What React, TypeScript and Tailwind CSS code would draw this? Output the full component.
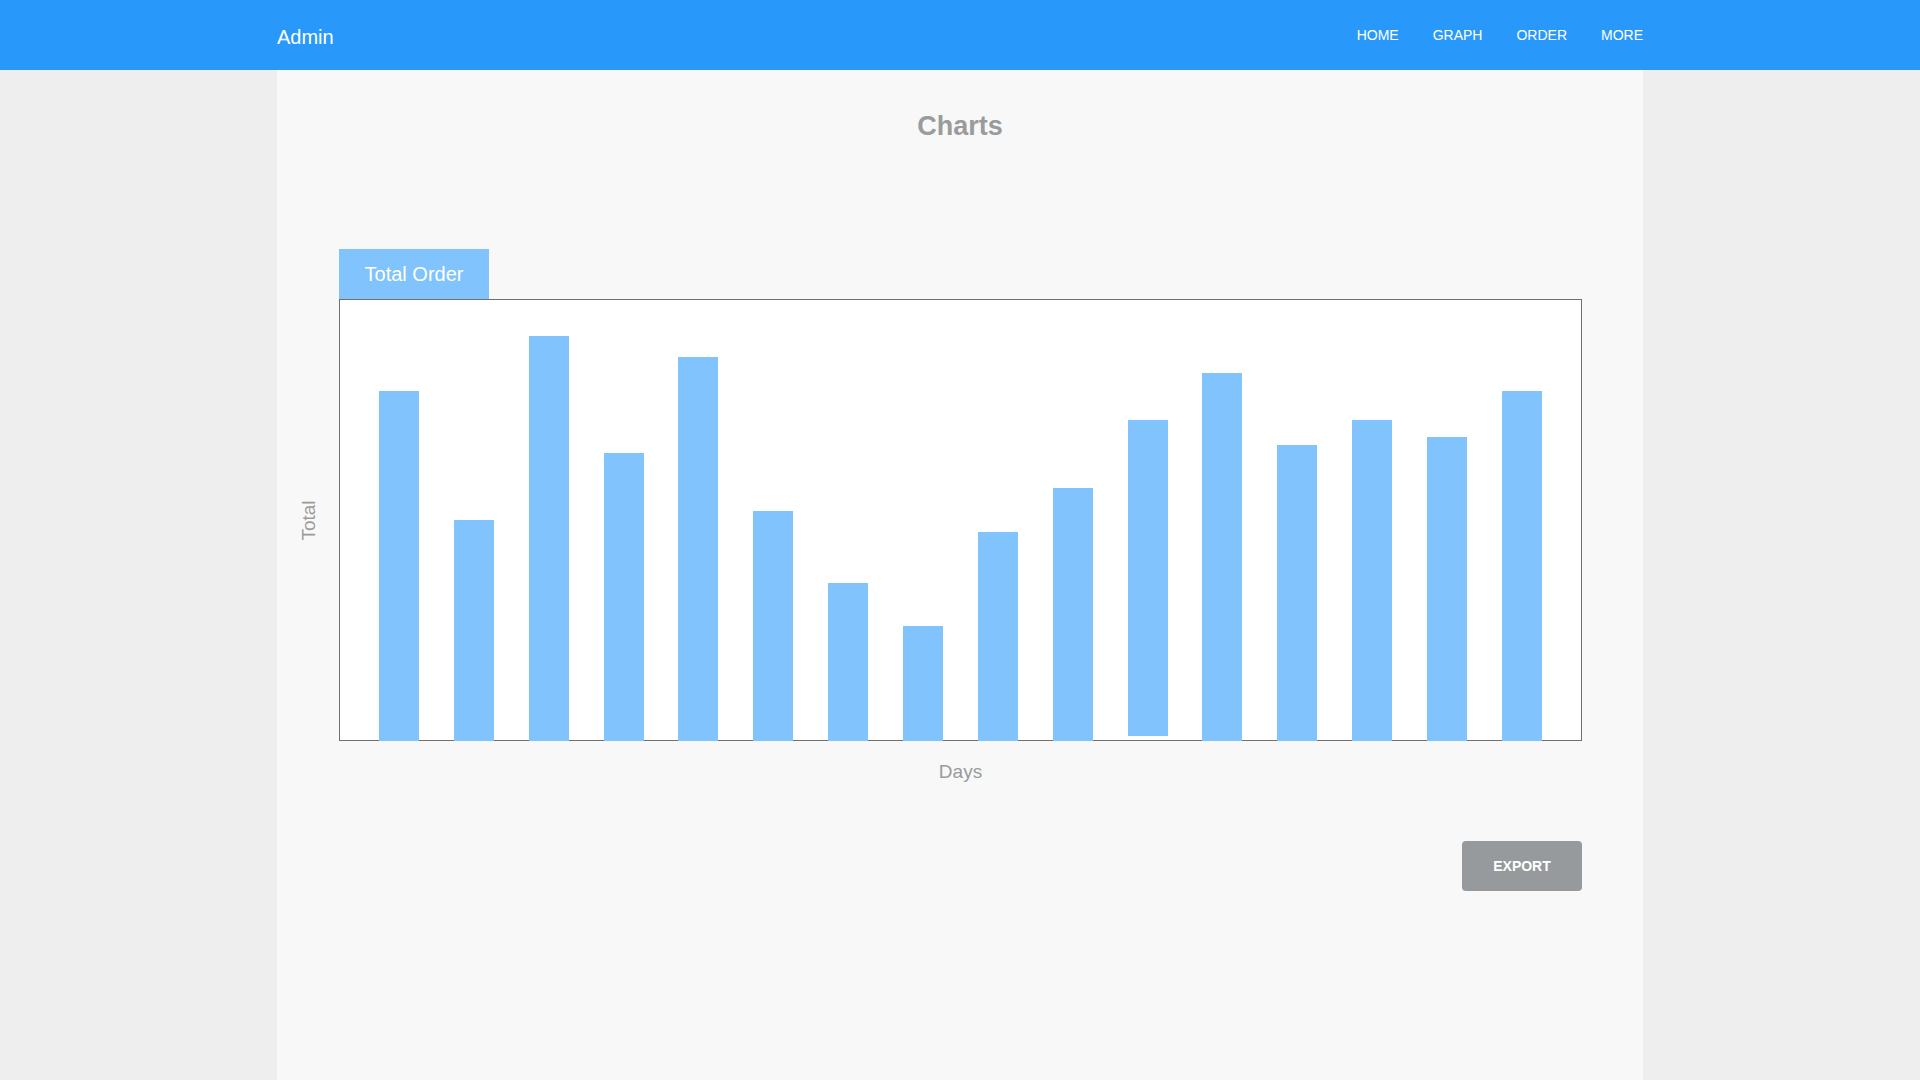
import React from "react";

type Bar = {
  height: number;
  lifted?: boolean;
};

const bars: Bar[] = [
  { height: 350 },
  { height: 221 },
  { height: 405 },
  { height: 288 },
  { height: 384 },
  { height: 230 },
  { height: 158 },
  { height: 115 },
  { height: 209 },
  { height: 253 },
  { height: 316, lifted: true },
  { height: 368 },
  { height: 296 },
  { height: 321 },
  { height: 304 },
  { height: 350 },
];

const links = ["HOME", "GRAPH", "ORDER", "MORE"];

export default function App() {
  return (
    <div className="min-h-screen bg-[#eeeeee] font-['Liberation_Sans',Arial,sans-serif]">
      <header className="h-[70px] bg-[#2899fb]">
        <div className="mx-auto flex h-full w-[1366px] items-center justify-between">
          <span className="pt-[3px] text-[20px] text-white">Admin</span>
          <nav className="flex gap-[34px] text-[14px] text-white">
            {links.map((l) => (
              <a key={l} href="#" className="leading-none">
                {l}
              </a>
            ))}
          </nav>
        </div>
      </header>

      <main className="mx-auto min-h-[1010px] w-[1366px] bg-[#f8f8f8]">
        <h1 className="pt-[43px] text-center text-[27px] font-bold leading-none text-[#999b9d]">
          Charts
        </h1>

        <section className="mt-[109px]">
          <div className="ml-[62px] flex h-[50px] w-[150px] items-center justify-center bg-[#80c3fd] text-[20px] text-white">
            Total Order
          </div>

          <div className="flex">
            <div className="flex w-[62px] items-center justify-center">
              <span className="-rotate-90 text-[19px] leading-none text-[#999b9d]">Total</span>
            </div>
            <div className="flex h-[442px] w-[1243px] items-end justify-between border border-[#707070] bg-white px-[39px]">
              {bars.map((b, i) => (
                <div
                  key={i}
                  className={
                    b.lifted
                      ? "mb-[4px] w-[40px] bg-[#80c3fd]"
                      : "-mb-px w-[40px] bg-[#80c3fd]"
                  }
                  style={{ height: b.height }}
                />
              ))}
            </div>
          </div>

          <div className="ml-[62px] mt-[21px] w-[1243px] text-center text-[19px] leading-none text-[#999b9d]">
            Days
          </div>

          <div className="ml-[62px] mt-[60px] flex w-[1243px] justify-end">
            <button className="h-[50px] w-[120px] rounded-[4px] bg-[#979a9c] text-[14px] font-bold text-white">
              EXPORT
            </button>
          </div>
        </section>
      </main>
    </div>
  );
}
